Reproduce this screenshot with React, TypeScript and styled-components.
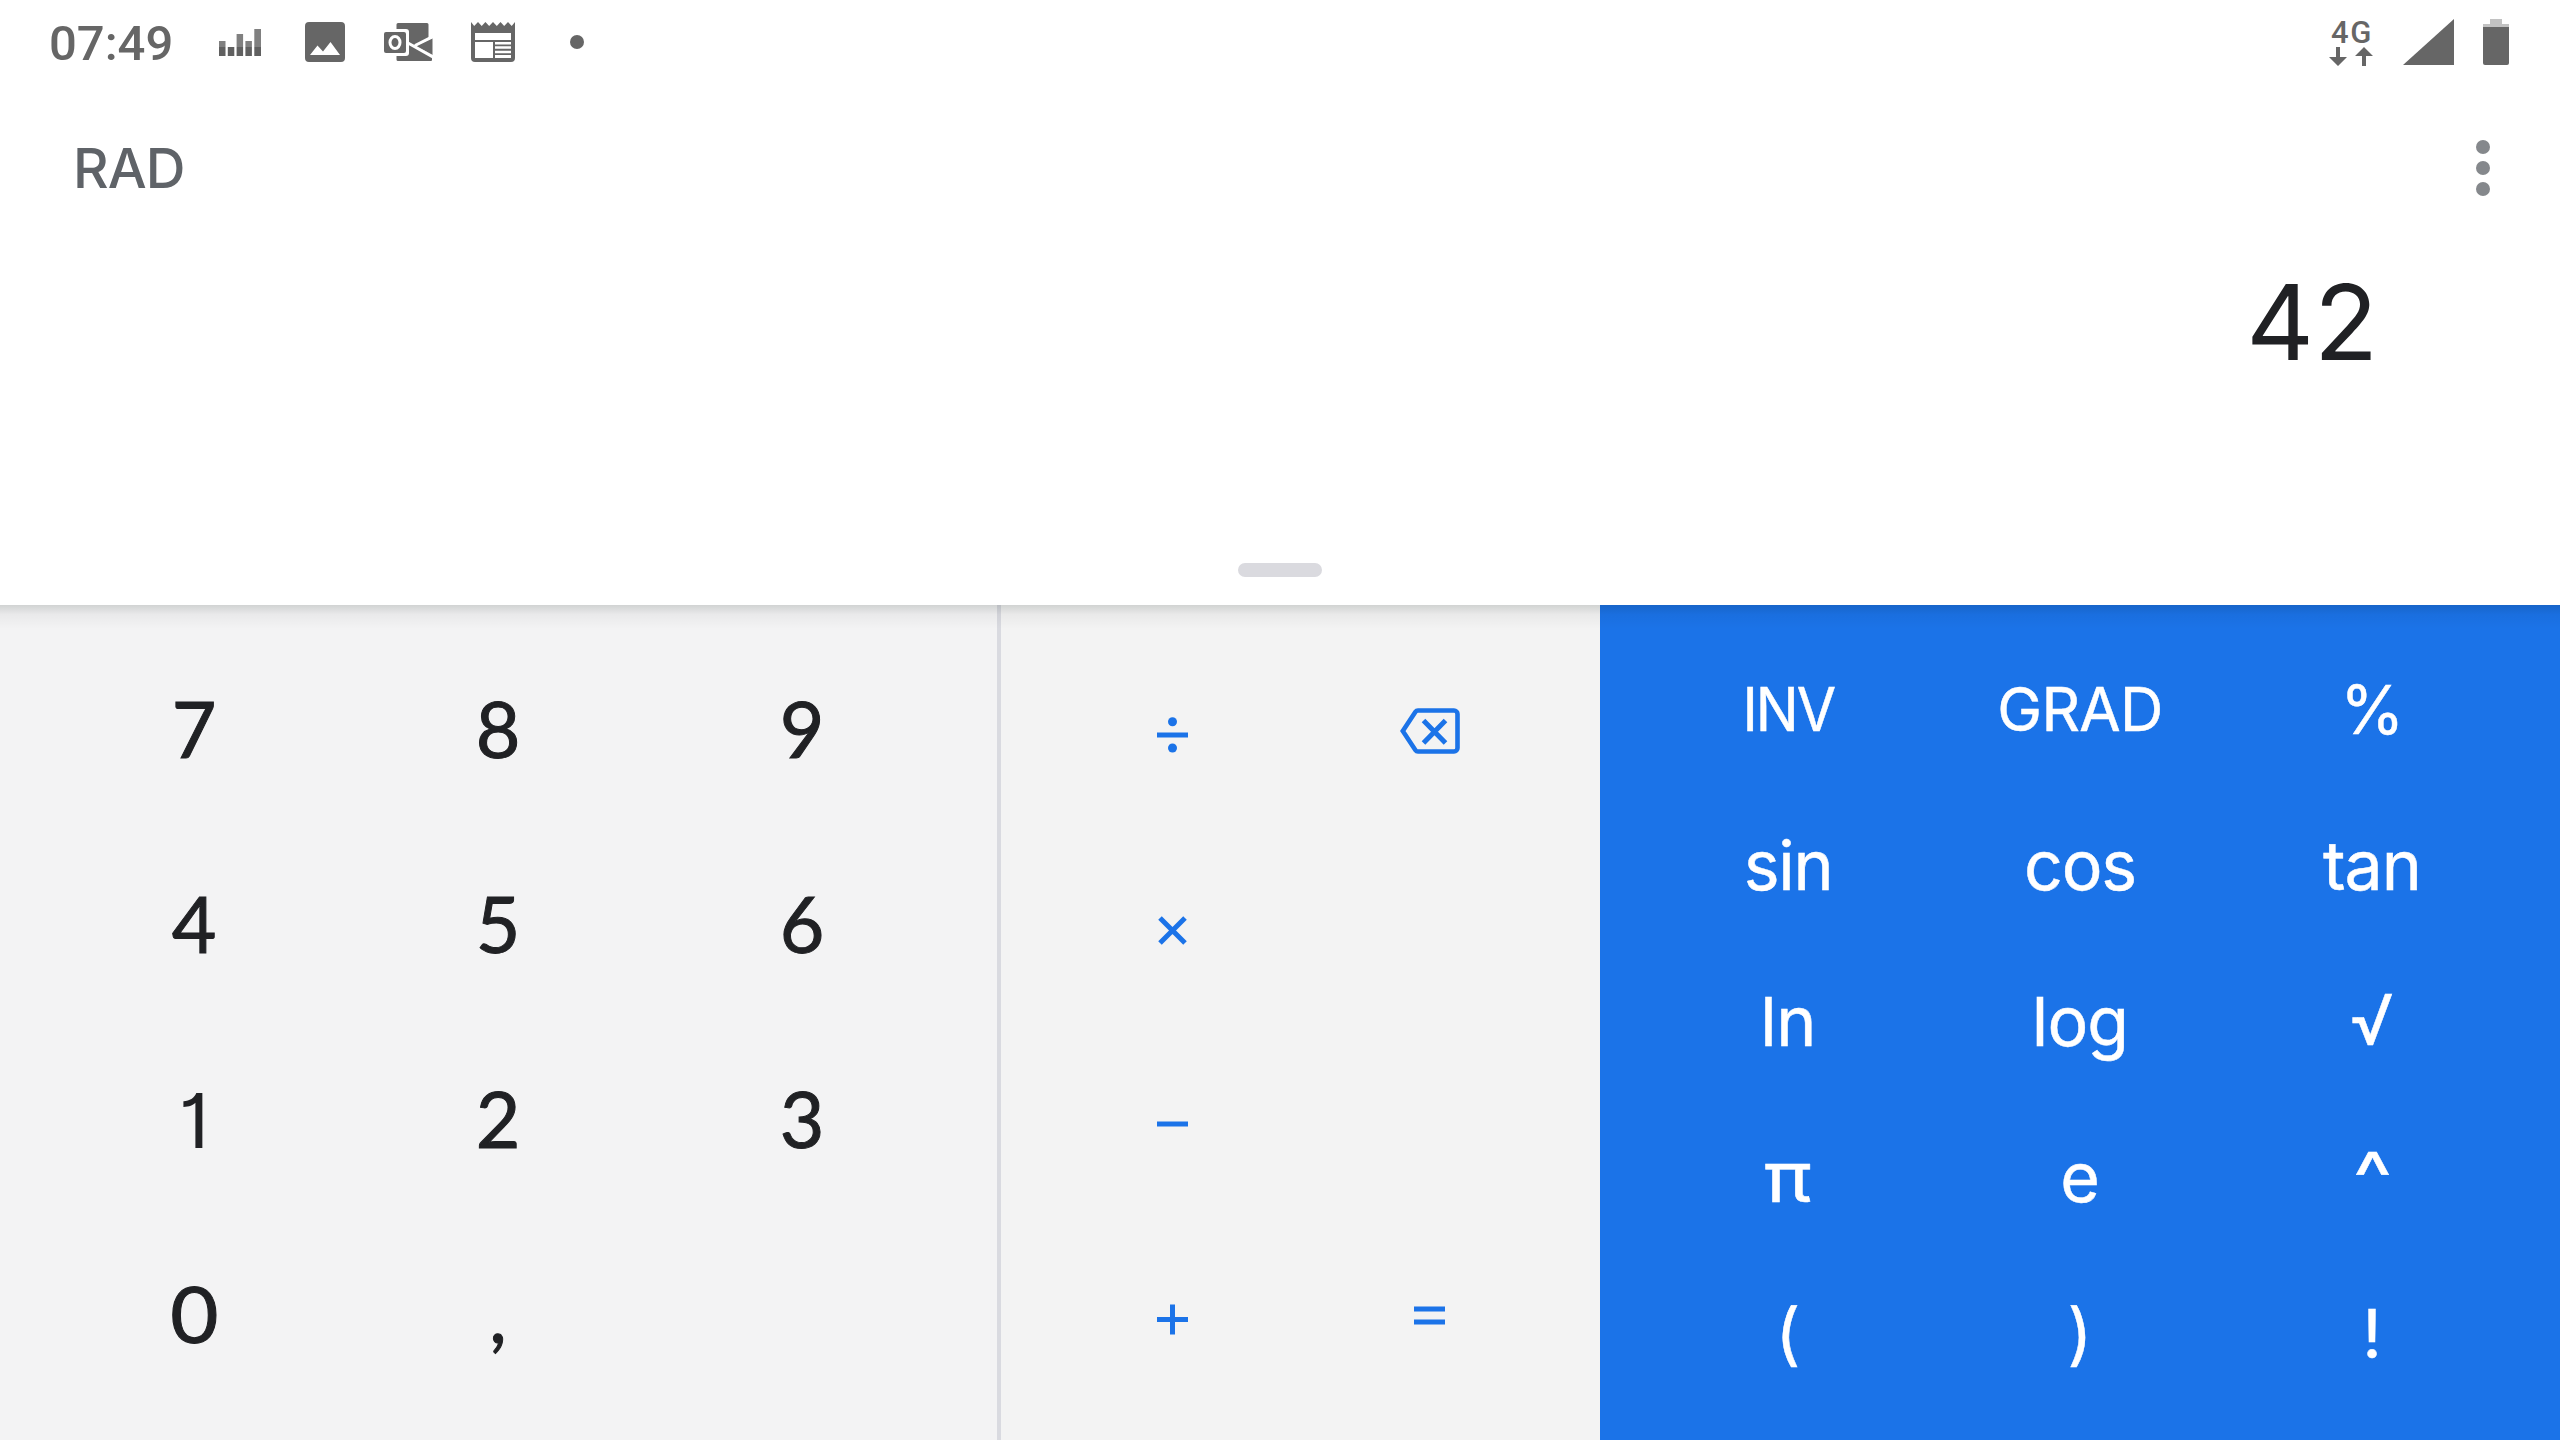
import React from 'react';
import styled, { createGlobalStyle } from 'styled-components';

const Global = createGlobalStyle`
  *, *::before, *::after { box-sizing: border-box; }
  html, body { margin: 0; padding: 0; background: #fff; }
  body { width: 2560px; height: 1440px; overflow: hidden; font-family: Inter, Roboto, sans-serif; }
  svg { display: block; }
`;

const Screen = styled.main`
  width: 2560px;
  height: 1440px;
  display: flex;
  flex-direction: column;
  background: #fff;
`;

const Top = styled.section`
  height: 605px;
  flex: none;
  display: flex;
  flex-direction: column;
`;

const StatusBar = styled.header`
  height: 84px;
  padding: 0 51px 0 49px;
  display: flex;
  justify-content: space-between;
  align-items: center;
  color: #666;
`;

const StatusGroup = styled.div`
  display: flex;
  align-items: center;
`;

const Clock = styled.time`
  font: 500 49px/56px Roboto, sans-serif;
  letter-spacing: 0;
  padding-top: 3px;
  width: 170px;
  white-space: nowrap;
`;

const Network = styled.div`
  width: 44px;
  display: flex;
  flex-direction: column;
  align-items: center;
  margin-right: 30px;
`;

const NetworkLabel = styled.span`
  font: 500 31px/28px Roboto, sans-serif;
  letter-spacing: 1.6px;
  margin-right: -2px;
`;

const AppBar = styled.div`
  height: 166px;
  display: flex;
  justify-content: space-between;
  align-items: center;
  padding: 2px 70px 0 73px;
`;

const Mode = styled.span`
  font: 500 55px/64px Inter, Roboto, sans-serif;
  letter-spacing: -1px;
  color: #5f6368;
`;

const MenuButton = styled.button`
  border: 0;
  padding: 0;
  background: none;
  display: flex;
  flex-direction: column;
  gap: 7px;
`;

const Dot = styled.i<{ $color: string }>`
  width: 14px;
  height: 14px;
  border-radius: 50%;
  background: ${p => p.$color};
`;

const Result = styled.output`
  display: block;
  padding-right: 182px;
  text-align: right;
  font-size: 105px;
  line-height: 144px;
  color: #202124;
`;

const HandleArea = styled.div`
  flex: 1;
  display: flex;
  justify-content: center;
  align-items: flex-end;
  padding-bottom: 28px;
`;

const Handle = styled.div`
  width: 84px;
  height: 14px;
  border-radius: 7px;
  background: #dadadf;
`;

const Pads = styled.section`
  flex: 1;
  display: flex;
  position: relative;
  &::before {
    content: '';
    position: absolute;
    inset: 0 0 auto;
    height: 24px;
    background: linear-gradient(rgba(0, 15, 10, 0.14), rgba(0, 0, 0, 0.04) 40%, rgba(0, 0, 0, 0));
    pointer-events: none;
  }
`;

const NumberPad = styled.div`
  width: 1001px;
  padding: 26px 0 29px 42px;
  display: grid;
  grid-template: repeat(4, 195px) / repeat(3, 304px);
  background: #f3f3f4;
  border-right: 4px solid #d9dae0;
`;

const OperatorPad = styled.div`
  width: 599px;
  padding: 28px 42px 27px 43px;
  display: grid;
  grid-template: repeat(4, 195px) / repeat(2, 257px);
  background: #f3f3f3;
`;

const FunctionPad = styled.div`
  flex: 1;
  padding: 26px 42px 28px 42px;
  display: grid;
  grid-template: repeat(5, 156px) / repeat(3, 292px);
  background: #1b73e8;
`;

const KeyBase = styled.button`
  border: 0;
  padding: 0;
  background: none;
  display: flex;
  align-items: center;
  justify-content: center;
  line-height: 1;
`;

const DigitKey = styled(KeyBase)<{ $font: string; $size: number }>`
  font-family: ${p => p.$font}, Inter, sans-serif;
  font-size: ${p => p.$size}px;
  color: #202124;
  -webkit-text-stroke: ${p => (p.$font === 'Lato' ? 1 : 0)}px #202124;
  font-feature-settings: 'cv01';
`;

const OperatorKey = styled(KeyBase)`
  color: #1b73e8;
`;

const FunctionKey = styled(KeyBase)<{ $size: number; $spacing: number; $font: string }>`
  font-family: ${p => p.$font}, Inter, sans-serif;
  font-size: ${p => p.$size}px;
  letter-spacing: ${p => p.$spacing}px;
  color: #fff;
  -webkit-text-stroke: 0.5px #fff;
`;

const Glyph = styled.span<{ $dy: number; $sx: number }>`
  display: block;
  transform: translateY(${p => p.$dy}px) scaleX(${p => p.$sx});
`;

const OperatorSlot = styled.span`
  display: block;
  margin-top: 9px;
`;

const Slot = styled.span<{ $w: number }>`
  width: ${p => p.$w}px;
  flex: none;
`;

const EqualizerIcon = () => (
  <svg width="43" height="27" viewBox="0 0 43 27">
    <path fill="#808080" d="M0 12h6.500v6H0zM17.600 5h6.500v13h-6.500zM26.400 12h6.500v6h-6.500zM35.300 0h6.700v18h-6.700z" />
    <path fill="#606060" d="M0 18h6.500v9H0zM8.800 18h6.500v9H8.800zM17.600 18h6.500v9h-6.500zM26.400 18h6.500v9h-6.500zM35.300 18h6.700v9h-6.700z" />
  </svg>
);

const PhotoIcon = () => (
  <svg width="40" height="40" viewBox="0 0 40 40" fill="#666">
    <path fillRule="evenodd" d="M4 0h32a4 4 0 0 1 4 4v32a4 4 0 0 1-4 4H4a4 4 0 0 1-4-4V4a4 4 0 0 1 4-4zM5 33h30L25.500 20 18 29.500 12.500 23.500z" />
  </svg>
);

const OutlookIcon = () => (
  <svg width="49" height="38" viewBox="0 0 49 38">
    <path fill="#666" d="M15 0h28a1.500 1.500 0 0 1 1.500 1.500V17L32 23l16 9v5a1 1 0 0 1-1 1H14a1.500 1.500 0 0 1-1.500-1.500V1.500A1.500 1.500 0 0 1 14 0z" />
    <path fill="#666" d="M48.500 15v17L32 23z" />
    <path d="M24 20l26 14.500M31 22.500L50 13" stroke="#fff" strokeWidth="3" />
    <path d="M45 0v15l5-2V0z" fill="#fff" />
    <rect x="-3" y="6" width="28" height="27" rx="3" fill="#fff" />
    <rect y="9" width="22" height="21" rx="2" fill="#666" />
    <ellipse cx="11" cy="19.500" rx="5" ry="6" fill="none" stroke="#fff" strokeWidth="3" />
  </svg>
);

const NewsIcon = () => (
  <svg width="44" height="40" viewBox="0 0 44 40">
    <path fill="#666" fillRule="evenodd" d="M0 0l3.200 4L7 0l3.700 4 3.700-4 3.800 4L22 0l3.800 4 3.700-4 3.700 4L37 0l3.700 4L44 0v36a4 4 0 0 1-4 4H4a4 4 0 0 1-4-4zM4 11v7h36v-7zM4 20v16h18V20zM24 20h16v2.500H24zM24 24.300h16v2.500H24zM24 28.700h16v2.500H24zM24 33h16v3H24z" />
  </svg>
);

const DataArrows = () => (
  <svg width="44" height="19" viewBox="0 0 44 19" fill="#666">
    <path d="M7 0h4v10h7l-9 9-9-9h7zM33 19h4V9h7L35 0l-9 9h7z" />
  </svg>
);

const SignalIcon = () => (
  <svg width="51" height="46" viewBox="0 0 51 46"><path d="M51 0v46H0z" fill="#666" /></svg>
);

const BatteryIcon = () => (
  <svg width="26" height="46" viewBox="0 0 26 46">
    <path d="M7 0h12v5h7v3H0V5h7z" fill="#c2c2c2" />
    <path d="M0 8h26v36a2 2 0 0 1-2 2H2a2 2 0 0 1-2-2z" fill="#666" />
  </svg>
);

const BackspaceIcon = () => (
  <svg width="60" height="46" viewBox="0 0 60 46" fill="none" stroke="#1b73e8" strokeWidth="4.600">
    <path d="M18 2.500h36a3.500 3.500 0 0 1 3.500 3.500v34a3.500 3.500 0 0 1-3.500 3.500H18a3 3 0 0 1-2.500-1.300L2.800 23 15.500 3.800A3 3 0 0 1 18 2.500z" />
    <path d="M23.500 12.500l22 22.500M45.500 12.500l-22 22.500" strokeWidth="5" />
  </svg>
);

const opPaths: Record<string, React.ReactNode> = {
  '÷': <><path d="M0 18h31" /><circle cx="15.500" cy="4.800" r="4.500" fill="#1b73e8" stroke="none" /><circle cx="15.500" cy="31" r="4.500" fill="#1b73e8" stroke="none" /></>,
  '×': <path d="M3 6l25 25M28 6L3 31" />,
  '−': <path d="M0 17h31" />,
  '+': <path d="M0 17.500h31M15.500 2.500v30" />,
  '=': <path d="M0 7h31M0 20h31" />,
};

const Operator = ({ name }: { name: string }) => (
  <OperatorSlot>
    <svg width="31" height="36" viewBox="0 0 31 36" fill="none" stroke="#1b73e8" strokeWidth="5">{opPaths[name]}</svg>
  </OperatorSlot>
);

type KeySpec = { label: string; font?: string; size?: number; spacing?: number; dy?: number; sx?: number };

const digits: KeySpec[] = [
  { label: '7' }, { label: '8' }, { label: '9' },
  { label: '4' }, { label: '5' }, { label: '6' },
  { label: '1', font: 'Inter', size: 76, dy: 1 }, { label: '2' }, { label: '3' },
  { label: '0', sx: 1.08 }, { label: ',' },
];

const operators = ['÷', 'del', '×', '', '−', '', '+', '='];

const functions: KeySpec[] = [
  { label: 'INV', size: 60, spacing: -2, sx: 0.95 },
  { label: 'GRAD', size: 60, spacing: -0.7 },
  { label: '%', size: 68, sx: 0.96 },
  { label: 'sin', spacing: -1.3 }, { label: 'cos', spacing: -1.2 }, { label: 'tan', spacing: -1 },
  { label: 'ln', spacing: -0.5 }, { label: 'log', spacing: -0.8 }, { label: '√', font: 'Roboto', size: 72 },
  { label: 'π', size: 69, sx: 1.14 }, { label: 'e' }, { label: '^', size: 74, sx: 1.12 },
  { label: '(' }, { label: ')' }, { label: '!' },
];

export default function App() {
  return (
    <Screen>
      <Global />
      <Top>
        <StatusBar>
          <StatusGroup>
            <Clock>07:49</Clock>
            <Slot $w={86}><EqualizerIcon /></Slot>
            <Slot $w={79}><PhotoIcon /></Slot>
            <Slot $w={87}><OutlookIcon /></Slot>
            <Slot $w={99}><NewsIcon /></Slot>
            <Dot $color="#666" />
          </StatusGroup>
          <StatusGroup>
            <Network><NetworkLabel>4G</NetworkLabel><DataArrows /></Network>
            <Slot $w={80}><SignalIcon /></Slot>
            <BatteryIcon />
          </StatusGroup>
        </StatusBar>
        <AppBar>
          <Mode>RAD</Mode>
          <MenuButton aria-label="Menu">
            <Dot $color="#85888c" /><Dot $color="#85888c" /><Dot $color="#85888c" />
          </MenuButton>
        </AppBar>
        <Result>42</Result>
        <HandleArea><Handle /></HandleArea>
      </Top>
      <Pads>
        <NumberPad>
          {digits.map(k => (
            <DigitKey key={k.label} $font={k.font ?? 'Lato'} $size={k.size ?? 77}>
              <Glyph $dy={k.dy ?? 0} $sx={k.sx ?? 1}>{k.label}</Glyph>
            </DigitKey>
          ))}
        </NumberPad>
        <OperatorPad>
          {operators.map((o, i) => (
            <OperatorKey key={i}>
              {o === 'del' ? <BackspaceIcon /> : o && <Operator name={o} />}
            </OperatorKey>
          ))}
        </OperatorPad>
        <FunctionPad>
          {functions.map(k => (
            <FunctionKey key={k.label} $size={k.size ?? 68} $spacing={k.spacing ?? 0} $font={k.font ?? 'Inter'}>
              <Glyph $dy={k.dy ?? 0} $sx={k.sx ?? 1}>{k.label}</Glyph>
            </FunctionKey>
          ))}
        </FunctionPad>
      </Pads>
    </Screen>
  );
}
